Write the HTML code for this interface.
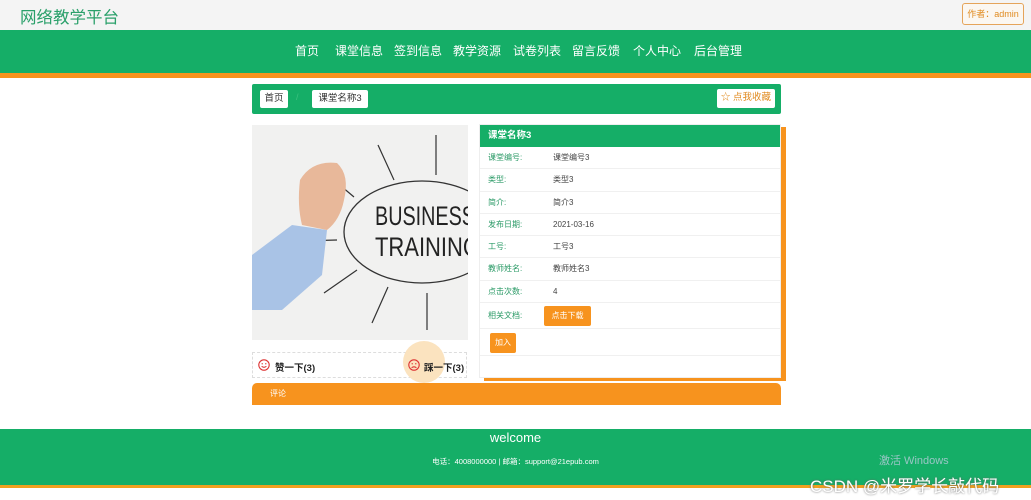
<!DOCTYPE html>
<html><head><meta charset="utf-8"><style>
*{margin:0;padding:0;box-sizing:border-box}
body{width:1031px;height:500px;overflow:hidden;background:#fff;font-family:"Liberation Sans","Noto Sans CJK SC",sans-serif;position:relative}
.abs{position:absolute}
.top{left:0;top:0;width:1031px;height:30px;background:#f4f4f4}
.title{left:20px;top:4px;font-size:16.5px;color:#2aa06a}
.author{left:962px;top:3px;width:62px;height:22px;border:1px solid #e5a45a;border-radius:3px;color:#e08a1e;font-size:9px;line-height:20px;text-align:center;background:#fbf7f1}
.nav{left:0;top:30px;width:1031px;height:43px;background:#15ae67}
.orange1{left:0;top:73px;width:1031px;height:5px;background:#f7931e}
.nav span{position:absolute;top:12px;color:#fff;font-size:12px}
.bc{left:252px;top:84px;width:529px;height:30px;background:#15ae67;border-radius:2px}
.btn{background:#fff;border-radius:2px;font-size:9.5px;color:#333;text-align:center;line-height:18px;height:18px}
.panel{left:479px;top:124px;width:302px;height:254px;background:#fff;box-shadow:5px 3px 0 #f7931e;border:1px solid #eee}
.ph{height:22px;background:#15ae67;color:#fff;font-weight:bold;font-size:9.5px;line-height:22px;padding-left:8px}
.row{height:22.3px;border-bottom:1px solid #f0f0f0;font-size:8px;line-height:22px;position:relative}
.row .k{position:absolute;left:8px;color:#2a9a66}
.row .v{position:absolute;left:73px;color:#444}
.ob{background:#f7931e;color:#fff;font-size:8px;border-radius:2px;text-align:center}
.likes{left:252px;top:352px;width:215px;height:26px;border:1px dashed #ddd;font-size:9.5px;font-weight:bold;color:#222}
.cm{left:252px;top:383px;width:529px;height:22px;background:#f7931e;border-radius:5px 5px 0 0;color:#fff;font-size:8px;line-height:22px;padding-left:18px}
.foot{left:0;top:429px;width:1031px;height:56px;background:#15ae67;color:#fff;text-align:center}
.orange2{left:0;top:485px;width:1031px;height:3px;background:#f0a020}
</style></head><body>
<div class="abs top"></div>
<div class="abs title">网络教学平台</div>
<div class="abs author">作者：admin</div>
<div class="abs nav">
<span style="left:295px">首页</span><span style="left:335px">课堂信息</span><span style="left:394px">签到信息</span><span style="left:453px">教学资源</span><span style="left:513px">试卷列表</span><span style="left:572px">留言反馈</span><span style="left:633px">个人中心</span><span style="left:694px">后台管理</span>
</div>
<div class="abs orange1"></div>
<div class="abs bc">
<div class="abs btn" style="left:8px;top:6px;width:28px">首页</div>
<div class="abs" style="left:44px;top:8px;color:#3cc07f;font-size:9px">/</div>
<div class="abs btn" style="left:60px;top:6px;width:56px">课堂名称3</div>
<div class="abs btn" style="left:465px;top:5px;width:58px;height:19px;color:#e08a1e">☆ 点我收藏</div>
</div>
<svg class="abs" style="left:252px;top:125px" width="216" height="215" viewBox="0 0 216 215">
<rect width="216" height="215" fill="#f1f1f0"/>
<ellipse cx="170" cy="107" rx="78" ry="51" fill="none" stroke="#333" stroke-width="1.3"/>
<text x="123" y="100" font-family="Liberation Sans" font-size="27" fill="#222" textLength="100" lengthAdjust="spacingAndGlyphs">BUSINESS</text>
<text x="123" y="131" font-family="Liberation Sans" font-size="27" fill="#222" textLength="105" lengthAdjust="spacingAndGlyphs">TRAINING</text>
<g stroke="#333" stroke-width="1.2" fill="none">
<path d="M126 20 L142 55 M184 10 L184 50 M48 116 L85 115 M72 168 L105 145 M120 198 L136 162 M175 205 L175 168 M70 45 L102 72"/>
</g>
<path d="M0 130 L40 100 L75 105 L70 150 L30 185 L0 185 Z" fill="#a9c3e6"/>
<path d="M48 55 Q60 35 85 38 Q98 50 92 75 Q88 95 75 105 L50 100 Q45 80 48 55 Z" fill="#e8b89a"/>
</svg>
<div class="abs panel">
<div class="ph">课堂名称3</div>
<div class="row"><span class="k">课堂编号:</span><span class="v">课堂编号3</span></div>
<div class="row"><span class="k">类型:</span><span class="v">类型3</span></div>
<div class="row"><span class="k">简介:</span><span class="v">简介3</span></div>
<div class="row"><span class="k">发布日期:</span><span class="v">2021-03-16</span></div>
<div class="row"><span class="k">工号:</span><span class="v">工号3</span></div>
<div class="row"><span class="k">教师姓名:</span><span class="v">教师姓名3</span></div>
<div class="row"><span class="k">点击次数:</span><span class="v">4</span></div>
<div class="row" style="height:26px;line-height:26px"><span class="k">相关文档:</span><div class="abs ob" style="left:64px;top:3px;width:47px;height:20px;line-height:20px">点击下载</div></div>
<div class="row" style="height:27px"><div class="abs ob" style="left:10px;top:4px;width:26px;height:20px;line-height:20px">加入</div></div>
</div>
<div class="abs likes">
<svg class="abs" style="left:5px;top:6px" width="12" height="12" viewBox="0 0 12 12"><circle cx="6" cy="6" r="5.2" fill="none" stroke="#d33" stroke-width="1.1"/><circle cx="4.2" cy="4.8" r=".7" fill="#d33"/><circle cx="7.8" cy="4.8" r=".7" fill="#d33"/><path d="M3.6 7.3 Q6 9.3 8.4 7.3" stroke="#d33" fill="none"/></svg>
<span class="abs" style="left:22px;top:7px">赞一下(3)</span>
<div class="abs" style="left:150px;top:-12px;width:42px;height:42px;border-radius:50%;background:#fbe3bf"></div>
<svg class="abs" style="left:155px;top:6px" width="12" height="12" viewBox="0 0 12 12"><circle cx="6" cy="6" r="5.2" fill="none" stroke="#d33" stroke-width="1.1"/><circle cx="4.2" cy="4.8" r=".7" fill="#d33"/><circle cx="7.8" cy="4.8" r=".7" fill="#d33"/><path d="M3.6 8.8 Q6 6.8 8.4 8.8" stroke="#d33" fill="none"/></svg>
<span class="abs" style="left:171px;top:7px">踩一下(3)</span>
</div>
<div class="abs cm">评论</div>
<div class="abs foot">
<div style="font-size:13px;margin-top:1px">welcome</div>
<div style="font-size:7.5px;margin-top:11px">电话：4008000000 | 邮箱：support@21epub.com</div>
</div>
<div class="abs orange2"></div>
<div class="abs" style="left:879px;top:452px;color:#bcd;font-size:11px;opacity:.8">激活 Windows</div>
<div class="abs" style="left:810px;top:472px;color:#fff;font-size:17px;text-shadow:0 0 2px #666">CSDN @米罗学长敲代码</div>
</body></html>
